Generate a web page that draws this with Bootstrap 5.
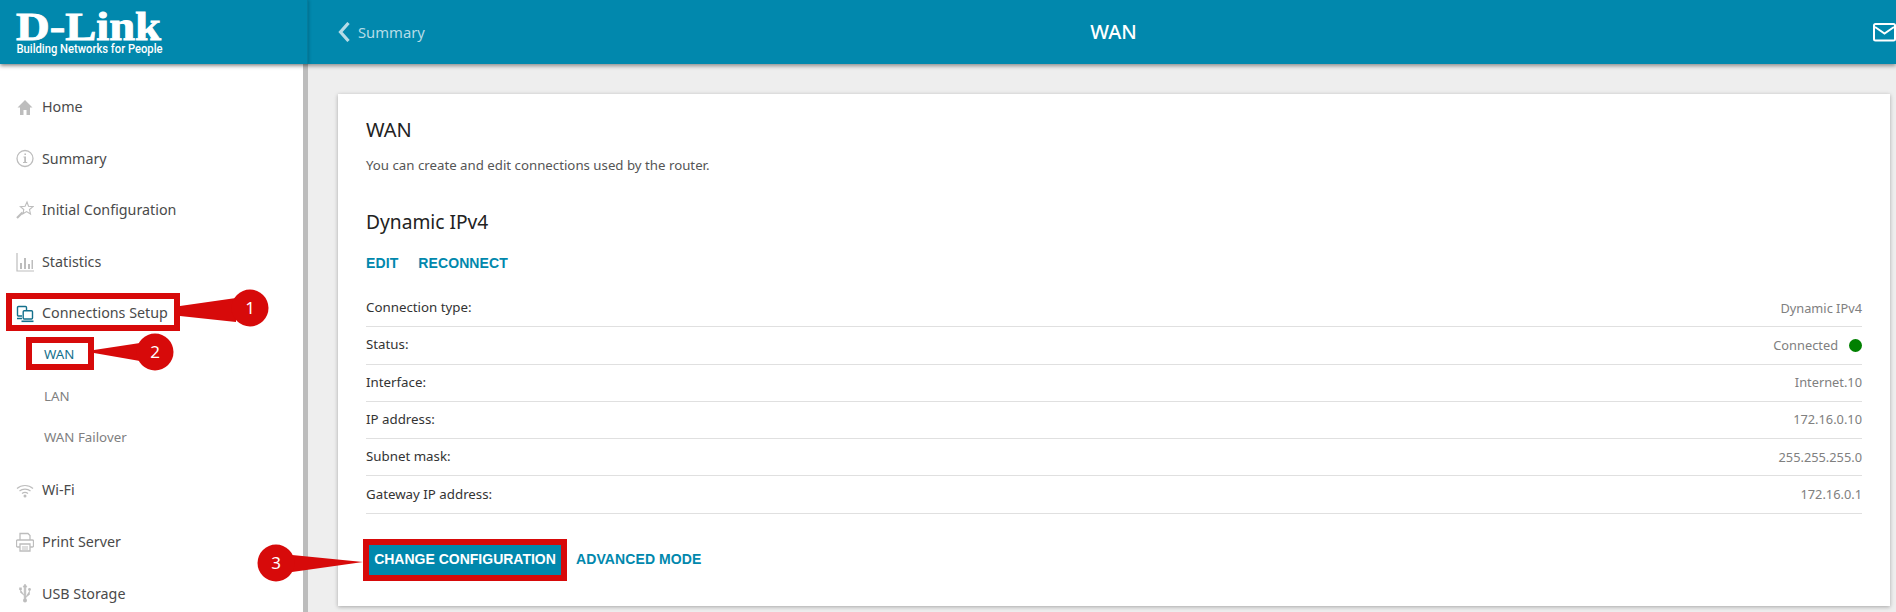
<!DOCTYPE html>
<html lang="en">
<head>
<meta charset="utf-8">
<title>WAN</title>
<link href="https://cdn.jsdelivr.net/npm/bootstrap@5.3.0/dist/css/bootstrap.min.css" rel="stylesheet">
<style>
html,body{height:612px;overflow:hidden}
body{position:relative;font-family:"Noto Sans","Liberation Sans",sans-serif;background:#eee;color:#333;font-size:14px}
.topbar{height:64px;background:#0188ad;box-shadow:0 2px 4px rgba(0,0,0,.4);position:relative;z-index:2}
.brand-box{width:308px;flex:none;border-right:1px solid #067c9c;box-shadow:1px 0 3px rgba(0,0,0,.2)}
.brand-box svg{display:block}
.back-link{width:100px;margin-left:30px;color:#b5dce7;font-size:14.8px;gap:8px}
.back-link svg{flex:none}
.page-name{color:#fff;font-size:20px;font-weight:500;flex:1;text-align:center;padding-right:84px}
.side{width:308px;flex:none;background:#fff;border-right:5px solid #bcbcbc;padding-top:17px;height:548px;overflow:hidden}
.side-item{height:51.6px;flex:none;padding-left:16px;gap:8px;color:#4a4a4a;font-size:14.3px}
.side-item svg{width:18px;height:20px;flex:none;color:#bdbdbd}
.side-item.on svg{color:#14708c}
.sub-group{margin:-5px 0 5px;flex:none}
.sub-item{height:41.8px;padding-left:44px;color:#808080;font-size:13.3px}
.sub-item.on{color:#14708c}
.work{padding:30px 6px 6px 30px;height:548px}
.sheet{height:512px;border-radius:0;border:0;box-shadow:0 1px 4px rgba(0,0,0,.3);padding:22px 28px}
.sheet h1{font-size:20px;font-weight:400;color:#222;margin:0 0 12px;line-height:27px}
.intro{font-size:13.25px;color:#555;margin:0 0 33px;line-height:20px}
.sheet h2{font-size:19.2px;font-weight:400;color:#222;margin:0 0 18px;line-height:27px}
.act{font-family:"Liberation Sans",sans-serif;font-weight:700;font-size:14px;color:#0188ad;text-transform:uppercase;letter-spacing:.1px}
.acts{gap:20px;margin-bottom:17px;line-height:20px}
.info-row{height:37.3px;border-bottom:1px solid #e0e0e0;font-size:13.3px;color:#333}
.info-row span+span{color:#808080;font-size:12.8px}
.dot{width:13px;height:13px;border-radius:50%;background:#008000;margin-left:11px;display:inline-block}
.foot{margin-top:31px;gap:15px}
.cfg-btn{background:#0188ad;color:#fff;border:0;border-radius:0;height:30px;width:192px;margin-left:3px;padding:0;font-family:"Liberation Sans",sans-serif;font-weight:700;font-size:14px;white-space:nowrap}
.cfg-btn:hover{background:#0188ad;color:#fff}
.marks{position:absolute;left:0;top:0;z-index:5;pointer-events:none}
.marks text{font-family:"Noto Sans",sans-serif;font-size:17px;fill:#fff;text-anchor:middle}
</style>
</head>
<body>
<header class="topbar d-flex align-items-center">
  <div class="brand-box h-100">
    <svg width="300" height="64" viewBox="0 0 300 64">
      <text x="16" y="40" fill="#fff" stroke="#fff" stroke-width=".9" font-family="Liberation Serif" font-weight="700" font-size="40" textLength="145" lengthAdjust="spacingAndGlyphs">D-Link</text>
      <text x="16.500" y="53" fill="#fff" font-family="Roboto" font-weight="500" font-size="12.500" textLength="146" lengthAdjust="spacingAndGlyphs">Building Networks for People</text>
    </svg>
  </div>
  <a class="back-link d-flex align-items-center text-decoration-none">
    <svg width="12" height="20" viewBox="0 0 12 20"><path d="M10.500 1 2.500 10l8 9" fill="none" stroke="#b5dce7" stroke-width="3.200"/></svg>
    <span>Summary</span>
  </a>
  <div class="page-name">WAN</div>
  <svg width="23" height="19" viewBox="0 0 23 19"><rect x="1" y="1" width="21" height="16.500" rx="1.500" fill="none" stroke="#fff" stroke-width="2"/><path d="M2 4l9.500 6.500L21 4" fill="none" stroke="#fff" stroke-width="2"/></svg>
</header>

<div class="d-flex">
  <nav class="side d-flex flex-column">
    <a class="side-item d-flex align-items-center text-decoration-none">
      <svg viewBox="0 0 18 20"><path d="M9 3 1.500 10.500H4V18h3.500v-5h3v5H14v-7.500h2.500z" fill="currentColor"/></svg><span>Home</span></a>
    <a class="side-item d-flex align-items-center text-decoration-none">
      <svg viewBox="0 0 18 20"><circle cx="9" cy="10.500" r="8" fill="none" stroke="currentColor" stroke-width="1.300"/><path d="M7.500 8.500H10v5.500h1.200v1H7v-1h1.200V9.500H7.500zM8.400 5.500h1.600v1.600H8.400z" fill="currentColor"/></svg><span>Summary</span></a>
    <a class="side-item d-flex align-items-center text-decoration-none">
      <svg viewBox="0 0 18 20"><path d="M11 2l1.500 4.300 4.500.3-3.500 2.900 1 4.500-3.900-2.400-3.700 2.200.9-4.300L4.400 6.600l4.700-.3z" fill="none" stroke="currentColor" stroke-width="1.100"/><path d="M1 18l5.500-5.500" stroke="currentColor" stroke-width="2.200"/></svg><span>Initial Configuration</span></a>
    <a class="side-item d-flex align-items-center text-decoration-none">
      <svg viewBox="0 0 18 20"><path d="M1 1v18h17" fill="none" stroke="currentColor" stroke-width="1.200"/><path d="M4 11h2v6H4zM8 6h2v11H8zM12 12h2v5h-2zM15.500 8h1.500v9h-1.500z" fill="currentColor"/></svg><span>Statistics</span></a>
    <a class="side-item on d-flex align-items-center text-decoration-none">
      <svg viewBox="0 0 18 20"><path d="M6 13H2.500a1 1 0 0 1-1-1V4.500a1 1 0 0 1 1-1h7a1 1 0 0 1 1 1V7M1 15.500h5" fill="none" stroke="currentColor" stroke-width="1.400"/><rect x="7.200" y="7.700" width="9.300" height="8.300" rx="1" fill="none" stroke="currentColor" stroke-width="1.400"/><path d="M5.500 18.300H17.500" stroke="currentColor" stroke-width="1.600"/></svg><span>Connections Setup</span></a>
    <div class="sub-group d-flex flex-column">
      <a class="sub-item on d-flex align-items-center text-decoration-none">WAN</a>
      <a class="sub-item d-flex align-items-center text-decoration-none">LAN</a>
      <a class="sub-item d-flex align-items-center text-decoration-none">WAN Failover</a>
    </div>
    <a class="side-item d-flex align-items-center text-decoration-none">
      <svg viewBox="0 0 18 20"><path d="M1 8.500c4.500-4 11.500-4 16 0M3.500 11c3-2.600 8-2.600 11 0M6 13.500c1.700-1.400 4.300-1.400 6 0" fill="none" stroke="currentColor" stroke-width="1.200"/><circle cx="9" cy="16" r="1.500" fill="currentColor"/></svg><span>Wi-Fi</span></a>
    <a class="side-item d-flex align-items-center text-decoration-none">
      <svg viewBox="0 0 18 20"><path d="M4 8V1.500h8l2 2V8M4 15H1.500a1 1 0 0 1-1-1V9a1 1 0 0 1 1-1h15a1 1 0 0 1 1 1v5a1 1 0 0 1-1 1H14" fill="none" stroke="currentColor" stroke-width="1.300"/><path d="M4 12h10v7H4z" fill="none" stroke="currentColor" stroke-width="1.300"/><path d="M6 15h6M6 17h6" stroke="currentColor"/></svg><span>Print Server</span></a>
    <a class="side-item d-flex align-items-center text-decoration-none">
      <svg viewBox="0 0 18 20"><path d="M9 1 7 4h1.200v13h1.600V4H11zM9 13 4.500 9.500V6.500M9 15l4.500-3.500V7.500" fill="currentColor" stroke="currentColor" stroke-width=".6"/><circle cx="9" cy="17.500" r="2" fill="currentColor"/><rect x="3.200" y="4.500" width="2.600" height="2.600" fill="currentColor"/><circle cx="13.500" cy="6.500" r="1.400" fill="currentColor"/></svg><span>USB Storage</span></a>
  </nav>

  <main class="work flex-grow-1">
    <section class="card sheet">
      <h1>WAN</h1>
      <p class="intro">You can create and edit connections used by the router.</p>
      <h2>Dynamic IPv4</h2>
      <div class="acts d-flex"><a class="act text-decoration-none">Edit</a><a class="act text-decoration-none">Reconnect</a></div>
      <div class="info-row d-flex justify-content-between align-items-center flex-shrink-0"><span>Connection type:</span><span>Dynamic IPv4</span></div>
      <div class="info-row d-flex justify-content-between align-items-center flex-shrink-0"><span>Status:</span><span class="d-flex align-items-center">Connected<i class="dot"></i></span></div>
      <div class="info-row d-flex justify-content-between align-items-center flex-shrink-0"><span>Interface:</span><span>Internet.10</span></div>
      <div class="info-row d-flex justify-content-between align-items-center flex-shrink-0"><span>IP address:</span><span>172.16.0.10</span></div>
      <div class="info-row d-flex justify-content-between align-items-center flex-shrink-0"><span>Subnet mask:</span><span>255.255.255.0</span></div>
      <div class="info-row d-flex justify-content-between align-items-center flex-shrink-0"><span>Gateway IP address:</span><span>172.16.0.1</span></div>
      <div class="foot d-flex align-items-center"><button class="btn cfg-btn" type="button">CHANGE CONFIGURATION</button><a class="act text-decoration-none">Advanced Mode</a></div>
    </section>
  </main>
</div>

<svg class="marks" width="1896" height="612" viewBox="0 0 1896 612">
  <g fill="none" stroke="#d70a0a" stroke-width="6">
    <rect x="9" y="296" width="168" height="32"/>
    <rect x="29" y="340" width="62" height="27"/>
    <rect x="366" y="542" width="198" height="36"/>
  </g>
  <g fill="#d70a0a">
    <path d="M180 306 236 298V322L180 316z"/><circle cx="250" cy="308" r="18.500"/>
    <path d="M94 350 140 343V361L94 353z"/><circle cx="155" cy="352" r="18.500"/>
    <path d="M363 562 292 555V572z"/><circle cx="276" cy="563" r="18.500"/>
  </g>
  <text x="250" y="314">1</text>
  <text x="155" y="358">2</text>
  <text x="276" y="569">3</text>
</svg>
<script src="https://cdn.jsdelivr.net/npm/bootstrap@5.3.0/dist/js/bootstrap.bundle.min.js"></script>
</body>
</html>
